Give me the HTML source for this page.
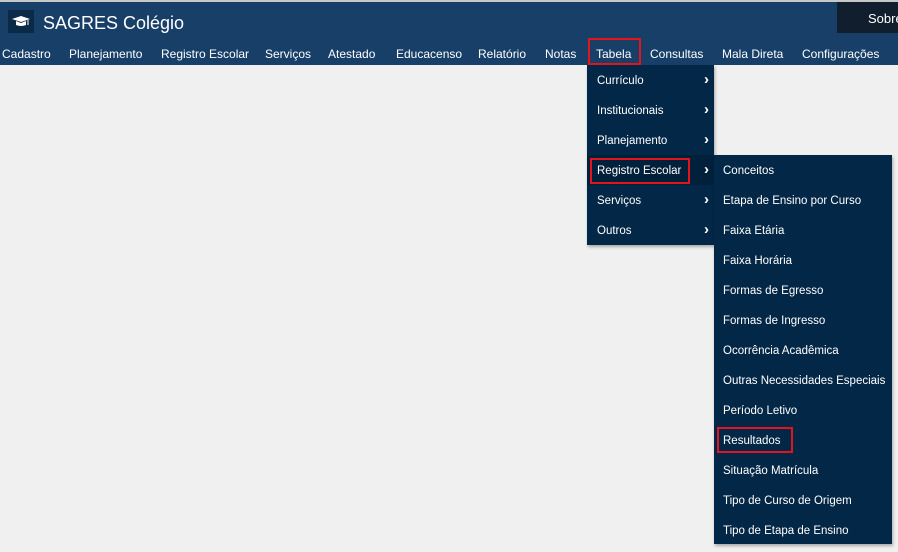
<!DOCTYPE html>
<html><head><meta charset="utf-8"><style>
*{margin:0;padding:0;box-sizing:border-box}
body{width:898px;height:552px;overflow:hidden;background:#f0f0f0;font-family:"Liberation Sans",sans-serif;position:relative}
.top{position:absolute;left:0;top:0;width:898px;height:2px;background:#c8c8c8}
.hdr{position:absolute;left:0;top:2px;width:898px;height:63px;background:#173f68}
.logo{position:absolute;left:8px;top:10px;width:26px;height:23px;background:#0b2a47}
.title{position:absolute;left:43px;top:13px;color:#fff;font-size:18px}
.sobre{position:absolute;left:837px;top:2px;width:61px;height:31px;background:#101e2e;color:#fff;font-size:13px;padding:9px 0 0 31px}
.nav span{position:absolute;top:47px;color:#fff;font-size:12px;white-space:nowrap}
.red{position:absolute;border:2px solid #e3141c}
.m1{position:absolute;left:587px;top:65px;width:127px;height:180px;background:#032746;box-shadow:1px 2px 3px rgba(0,0,0,.3)}
.m2{position:absolute;left:714px;top:155px;width:178px;height:389px;background:#032746;box-shadow:1px 2px 3px rgba(0,0,0,.3)}
.it{height:30px;line-height:32px;color:#fff;font-size:11.5px;padding-left:10px;position:relative;white-space:nowrap}
.m2 .it{padding-left:9px}
.arr{position:absolute;right:5px;top:-1px;font-size:15px;font-weight:bold}
.hl{background:#01203b}
</style></head><body>
<div class="top"></div>
<div class="hdr"></div>
<div class="logo"><svg width="26" height="23" viewBox="0 0 26 23"><path d="M4 9 L13 6 L22 9 L13 12 Z" fill="#fff"/><path d="M8 11 L8 15 Q13 17 18 15 L18 11 L13 13 Z" fill="#fff"/><line x1="20" y1="10" x2="20" y2="15" stroke="#fff" stroke-width="1"/></svg></div>
<div class="title">SAGRES Colégio</div>
<div class="sobre">Sobre</div>
<div class="nav">
<span style="left:2px">Cadastro</span><span style="left:69px">Planejamento</span><span style="left:161px">Registro Escolar</span><span style="left:265px">Serviços</span><span style="left:328px">Atestado</span><span style="left:396px">Educacenso</span><span style="left:478px">Relatório</span><span style="left:545px">Notas</span><span style="left:596px">Tabela</span><span style="left:650px">Consultas</span><span style="left:722px">Mala Direta</span><span style="left:802px">Configurações</span>
</div>
<div class="red" style="left:588px;top:38px;width:53px;height:27px"></div>
<div class="m1">
<div class="it">Currículo<span class="arr">›</span></div>
<div class="it">Institucionais<span class="arr">›</span></div>
<div class="it">Planejamento<span class="arr">›</span></div>
<div class="it hl">Registro Escolar<span class="arr">›</span></div>
<div class="it">Serviços<span class="arr">›</span></div>
<div class="it">Outros<span class="arr">›</span></div>
</div>
<div class="m2">
<div class="it">Conceitos</div><div class="it">Etapa de Ensino por Curso</div><div class="it">Faixa Etária</div><div class="it">Faixa Horária</div><div class="it">Formas de Egresso</div><div class="it">Formas de Ingresso</div><div class="it">Ocorrência Acadêmica</div><div class="it">Outras Necessidades Especiais</div><div class="it">Período Letivo</div><div class="it">Resultados</div><div class="it">Situação Matrícula</div><div class="it">Tipo de Curso de Origem</div><div class="it">Tipo de Etapa de Ensino</div>
</div>
<div class="red" style="left:590px;top:158px;width:100px;height:26px"></div>
<div class="red" style="left:717px;top:427px;width:76px;height:26px"></div>
</body></html>
